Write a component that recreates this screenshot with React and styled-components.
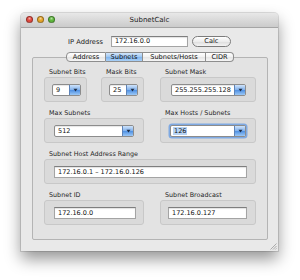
import React from 'react';
import styled, { createGlobalStyle } from 'styled-components';

const GlobalStyle = createGlobalStyle`
  html, body {
    margin: 0;
    padding: 0;
    background: #fff;
  }
  body {
    font-family: "DejaVu Sans", "Liberation Sans", sans-serif;
    color: #222;
  }
`;

const Stage = styled.div`
  width: 300px;
  height: 280px;
  padding: 13px 0 0 21px;
  box-sizing: border-box;
`;

const Window = styled.div`
  position: relative;
  width: 257px;
  height: 238px;
  background: #e9e9e9;
  border-radius: 4px 4px 0 0;
  box-shadow: 0 8px 16px rgba(0, 0, 0, 0.42), 0 0 0 1px rgba(0, 0, 0, 0.12);
  display: flex;
  flex-direction: column;
`;

const TitleBar = styled.div`
  height: 14px;
  flex: none;
  background: linear-gradient(#e8e8e8, #cbcbcb);
  border-bottom: 1px solid #a5a5a5;
  border-radius: 4px 4px 0 0;
  display: grid;
  grid-template-columns: 1fr auto 1fr;
  align-items: center;
  padding: 0 5px;
`;

const Lights = styled.div`
  display: flex;
  gap: 4px;
  margin-top: -1px;
`;

const Light = styled.span`
  width: 7px;
  height: 7px;
  border-radius: 50%;
  box-sizing: border-box;
  border: 0.5px solid rgba(0, 0, 0, 0.35);
  background: radial-gradient(circle at 50% 30%, #fff8 0, transparent 45%), ${p => p.color};
`;

const Title = styled.div`
  font-size: 7px;
  color: #222;
  line-height: 14px;
`;

const IpRow = styled.div`
  display: flex;
  justify-content: center;
  align-items: center;
  margin-top: 8px;
  height: 11px;
`;

const IpLabel = styled.span`
  font-size: 6.7px;
  margin-right: 8px;
  color: #1c1c1c;
`;

const TextField = styled.div`
  height: ${p => p.h || 11}px;
  width: ${p => (p.w ? `${p.w}px` : '100%')};
  box-sizing: border-box;
  background: #fff;
  border: 1px solid #a4a4a4;
  border-top-color: #7e7e7e;
  box-shadow: inset 0 1px 1px rgba(0, 0, 0, 0.12);
  font-size: 6.5px;
  line-height: ${p => (p.h || 11) - 2}px;
  padding-left: 3px;
  color: #111;
`;

const Button = styled.div`
  width: 39px;
  height: 11px;
  margin-left: 4px;
  box-sizing: border-box;
  border: 1px solid #7c7c7c;
  border-radius: 6px;
  background: linear-gradient(#fff, #ececec 50%, #dcdcdc 51%, #f4f4f4);
  font-size: 6.6px;
  line-height: 9px;
  text-align: center;
`;

const TabView = styled.div`
  flex: 1;
  display: flex;
  flex-direction: column;
  margin: 5px 10px 11px 11px;
`;

const TabBar = styled.div`
  display: flex;
  justify-content: center;
  position: relative;
  z-index: 1;
  margin-bottom: -5px;
`;

const Tab = styled.div`
  height: 10px;
  box-sizing: border-box;
  width: ${p => p.w}px;
  border: 1px solid #8e8e8e;
  border-left-width: ${p => (p.first ? 1 : 0)}px;
  border-radius: ${p => (p.first ? '4px 0 0 4px' : p.last ? '0 4px 4px 0' : '0')};
  background: ${p =>
    p.active
      ? 'linear-gradient(#d3e6fb, #9cc6f2 50%, #7fb4ee 51%, #a9d0f7)'
      : 'linear-gradient(#ffffff, #f1f1f1 50%, #e4e4e4 51%, #f6f6f6)'};
  font-size: 6.6px;
  line-height: 8px;
  text-align: center;
  color: #111;
`;

const Panel = styled.div`
  flex: 1;
  background: #e3e3e3;
  border: 1px solid #b4b4b4;
  border-radius: 2px;
  padding: 10px 11px 0 11px;
  display: grid;
  grid-template-columns: 100px 96px;
  grid-auto-rows: 34px;
  column-gap: 16px;
  row-gap: 7px;
  align-content: start;
`;

const Pair = styled.div`
  display: grid;
  grid-template-columns: 43px 43px;
  column-gap: 14px;
`;

const Field = styled.div`
  display: flex;
  flex-direction: column;
  grid-column: ${p => (p.wide ? '1 / -1' : 'auto')};
`;

const Label = styled.div`
  height: 9px;
  font-size: 6.4px;
  line-height: 9px;
  padding-left: 5px;
  color: #262626;
  white-space: nowrap;
`;

const Group = styled.div`
  height: 25px;
  box-sizing: border-box;
  background: #dadada;
  border: 1px solid #c8c8c8;
  border-radius: 3px;
  display: flex;
  align-items: center;
  padding: 0 ${p => p.pad ?? 9}px 0 ${p => p.padL ?? p.pad ?? 9}px;
`;

const Popup = styled.div`
  flex: 1;
  height: 12px;
  box-sizing: border-box;
  display: flex;
  background: #fff;
  border: 1px solid #8c8c8c;
  border-radius: 2px;
  box-shadow: ${p => (p.focused ? '0 0 0 1.5px #7fa9e2' : 'inset 0 1px 1px rgba(0,0,0,0.1)')};
`;

const PopupText = styled.div`
  flex: 1;
  font-size: 6.5px;
  line-height: 10px;
  padding-left: 3px;
  color: #111;
  white-space: nowrap;
  overflow: hidden;
`;

const Selected = styled.span`
  background: #b6d3f5;
  padding: 0 1px;
  margin-left: -1px;
`;

const Arrow = styled.div`
  width: 10px;
  flex: none;
  border-left: 1px solid #5d83b8;
  border-radius: 0 1px 1px 0;
  background: linear-gradient(#cfe3fa, #7fb0ec 50%, #4d8fe2 51%, #9cc8f6);
  display: flex;
  align-items: center;
  justify-content: center;
`;

const Grip = styled.svg`
  position: absolute;
  right: 1px;
  bottom: 1px;
`;

const Dropdown = ({ value, focused }) => (
  <Popup focused={focused}>
    <PopupText>{focused ? <Selected>{value}</Selected> : value}</PopupText>
    <Arrow>
      <svg width="5" height="4" viewBox="0 0 5 4">
        <path d="M0.5 0.8 L4.5 0.8 L2.5 3.4 Z" fill="#1d2c45" />
      </svg>
    </Arrow>
  </Popup>
);

export default function App() {
  return (
    <>
      <GlobalStyle />
      <Stage>
        <Window>
          <TitleBar>
            <Lights>
              <Light color="#e2493f" />
              <Light color="#e6a52a" />
              <Light color="#5fb83d" />
            </Lights>
            <Title>SubnetCalc</Title>
            <span />
          </TitleBar>

          <IpRow>
            <IpLabel>IP Address</IpLabel>
            <TextField w={77}>172.16.0.0</TextField>
            <Button>Calc</Button>
          </IpRow>

          <TabView>
            <TabBar>
              <Tab first w={40}>Address</Tab>
              <Tab active w={37}>Subnets</Tab>
              <Tab w={63}>Subnets/Hosts</Tab>
              <Tab last w={28}>CIDR</Tab>
            </TabBar>
            <Panel>
              <Pair>
                <Field>
                  <Label>Subnet Bits</Label>
                  <Group padL={7} pad={5}>
                    <Dropdown value="9" />
                  </Group>
                </Field>
                <Field>
                  <Label>Mask Bits</Label>
                  <Group padL={7} pad={5}>
                    <Dropdown value="25" />
                  </Group>
                </Field>
              </Pair>
              <Field>
                <Label>Subnet Mask</Label>
                <Group padL={10} pad={9}>
                  <Dropdown value="255.255.255.128" />
                </Group>
              </Field>

              <Field>
                <Label>Max Subnets</Label>
                <Group pad={9}>
                  <Dropdown value="512" />
                </Group>
              </Field>
              <Field>
                <Label>Max Hosts / Subnets</Label>
                <Group pad={9}>
                  <Dropdown value="126" focused />
                </Group>
              </Field>

              <Field wide>
                <Label>Subnet Host Address Range</Label>
                <Group pad={8} padL={9}>
                  <TextField h={12}>172.16.0.1 – 172.16.0.126</TextField>
                </Group>
              </Field>

              <Field>
                <Label>Subnet ID</Label>
                <Group pad={7} padL={9}>
                  <TextField h={12}>172.16.0.0</TextField>
                </Group>
              </Field>
              <Field>
                <Label>Subnet Broadcast</Label>
                <Group pad={8} padL={7}>
                  <TextField h={12}>172.16.0.127</TextField>
                </Group>
              </Field>
            </Panel>
          </TabView>

          <Grip width="8" height="8" viewBox="0 0 8 8">
            <path d="M7.5 1.5 L1.5 7.5 M7.5 4 L4 7.5 M7.5 6.3 L6.3 7.5" stroke="#9a9a9a" strokeWidth="0.8" />
          </Grip>
        </Window>
      </Stage>
    </>
  );
}
